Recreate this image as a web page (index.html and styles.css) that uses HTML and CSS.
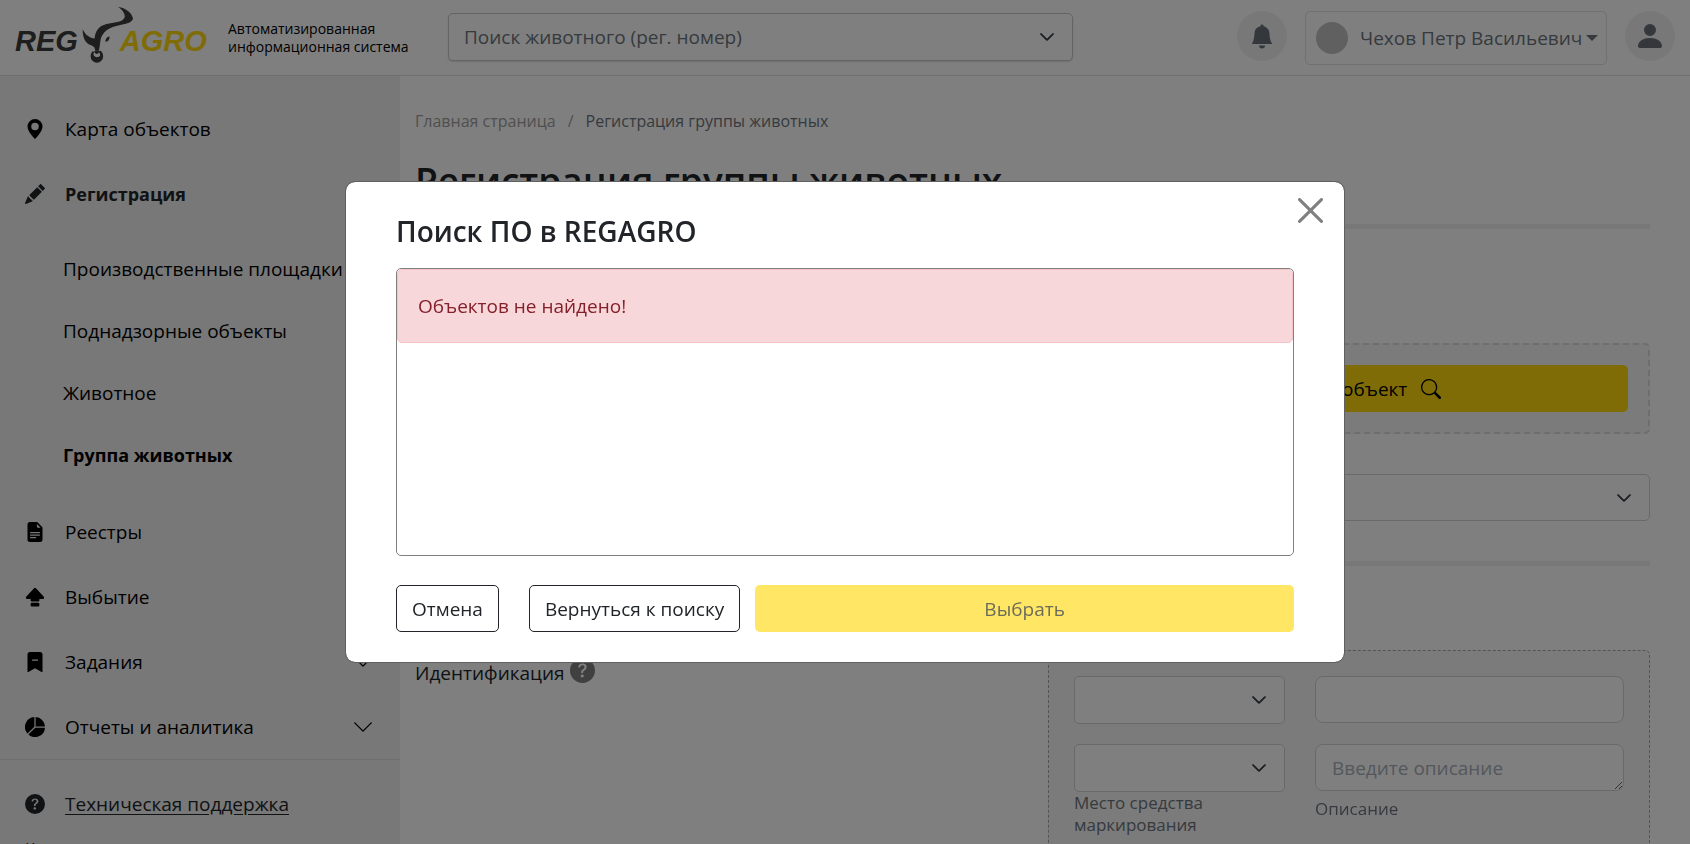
FILE: index.html
```html
<!DOCTYPE html>
<html lang="ru">
<head>
<meta charset="utf-8">
<title>Регистрация группы животных</title>
<link rel="stylesheet" href="styles.css">
</head>
<body>
<svg class="sprite" aria-hidden="true">
  <symbol id="i-pin" viewBox="0 0 16 16"><path fill-rule="evenodd" d="M8 16s6-5.686 6-10A6 6 0 0 0 2 6c0 4.314 6 10 6 10m0-7a3 3 0 1 1 0-6 3 3 0 0 1 0 6"/></symbol>
  <symbol id="i-pencil" viewBox="0 0 16 16"><path d="M12.854.146a.5.5 0 0 0-.707 0L10.500 1.793 14.207 5.500l1.647-1.646a.5.5 0 0 0 0-.708zM13.500 6.207 9.793 2.500 3.293 9H3.500a.5.5 0 0 1 .5.5v.5h.5a.5.5 0 0 1 .5.5v.5h.5a.5.5 0 0 1 .5.5v.5h.5a.5.5 0 0 1 .5.5v.207zM6.032 13.685A.5.5 0 0 1 6 13.500V13h-.5a.5.5 0 0 1-.5-.5V12h-.5a.5.5 0 0 1-.5-.5V11h-.5a.5.5 0 0 1-.5-.5V10h-.5a.5.5 0 0 1-.175-.032l-.179.178a.5.5 0 0 0-.11.168l-2 5a.5.5 0 0 0 .65.65l5-2a.5.5 0 0 0 .168-.11z"/></symbol>
  <symbol id="i-file" viewBox="0 0 16 16"><path d="M9.293 0H4a2 2 0 0 0-2 2v12a2 2 0 0 0 2 2h8a2 2 0 0 0 2-2V4.707A1 1 0 0 0 13.707 4L10 .293A1 1 0 0 0 9.293 0M9.500 3.500v-2l3 3h-2a1 1 0 0 1-1-1M4.500 9a.5.5 0 0 1 0-1h7a.5.5 0 0 1 0 1zM4 10.500a.5.5 0 0 1 .5-.5h7a.5.5 0 0 1 0 1h-7a.5.5 0 0 1-.5-.5m.5 2.500a.5.5 0 0 1 0-1h4a.5.5 0 0 1 0 1z"/></symbol>
  <symbol id="i-eject" viewBox="0 0 16 16"><path d="M7.270 1.047a1 1 0 0 1 1.460 0l6.345 6.770c.6.638.146 1.683-.73 1.683H11.500v1a1 1 0 0 1-1 1h-5a1 1 0 0 1-1-1v-1H1.654C.78 9.500.326 8.455.924 7.816zM4.500 13.500a1 1 0 0 1 1-1h5a1 1 0 0 1 1 1v1a1 1 0 0 1-1 1h-5a1 1 0 0 1-1-1z"/></symbol>
  <symbol id="i-bookmark" viewBox="0 0 16 16"><path fill-rule="evenodd" d="M2 15.500V2a2 2 0 0 1 2-2h8a2 2 0 0 1 2 2v13.500a.5.5 0 0 1-.74.439L8 13.069l-5.260 2.870A.5.5 0 0 1 2 15.500M6 6a.5.5 0 0 0 0 1h4a.5.5 0 0 0 0-1z"/></symbol>
  <symbol id="i-pie" viewBox="0 0 16 16"><path d="M15.985 8.500H8.207l-5.500 5.500a8 8 0 0 0 13.277-5.500zM2 13.292A8 8 0 0 1 7.500.015v7.778zM8.500.015V7.500h7.485A8 8 0 0 0 8.500.015"/></symbol>
  <symbol id="i-help" viewBox="0 0 16 16"><path d="M16 8A8 8 0 1 1 0 8a8 8 0 0 1 16 0M5.496 6.033h.825c.138 0 .248-.113.266-.25.09-.656.54-1.134 1.342-1.134.686 0 1.314.343 1.314 1.168 0 .635-.374.927-.965 1.371-.673.489-1.206 1.060-1.168 1.987l.003.217a.25.25 0 0 0 .25.246h.811a.25.25 0 0 0 .25-.25v-.105c0-.718.273-.927 1.010-1.486.609-.463 1.244-.977 1.244-2.056 0-1.511-1.276-2.241-2.673-2.241-1.267 0-2.655.590-2.750 2.286a.237.237 0 0 0 .241.247m2.325 6.443c.61 0 1.029-.394 1.029-.927 0-.552-.42-.94-1.029-.94-.584 0-1.009.388-1.009.94 0 .533.425.927 1.010.927z"/></symbol>
  <symbol id="i-down" viewBox="0 0 16 16"><path d="M1.646 4.646a.5.5 0 0 1 .708 0L8 10.293l5.646-5.647a.5.5 0 0 1 .708.708l-6 6a.5.5 0 0 1-.708 0l-6-6a.5.5 0 0 1 0-.708"/></symbol>
  <symbol id="i-bell" viewBox="0 0 16 16"><path d="M8 16a2 2 0 0 0 2-2H6a2 2 0 0 0 2 2m.995-14.901a1 1 0 1 0-1.990 0A5 5 0 0 0 3 6c0 1.098-.5 6-2 7h14c-1.500-1-2-5.902-2-7 0-2.420-1.720-4.440-4.005-4.901"/></symbol>
  <symbol id="i-person" viewBox="0 0 16 16"><path d="M3 14s-1 0-1-1 1-4 6-4 6 3 6 4-1 1-1 1zm5-6a3 3 0 1 0 0-6 3 3 0 0 0 0 6"/></symbol>
  <symbol id="i-search" viewBox="0 0 16 16"><path d="M11.742 10.344a6.500 6.500 0 1 0-1.397 1.398h-.001q.044.060.098.115l3.850 3.850a1 1 0 0 0 1.415-1.414l-3.850-3.850a1 1 0 0 0-.115-.1zM12 6.500a5.500 5.500 0 1 1-11 0 5.500 5.500 0 0 1 11 0"/></symbol>
  <symbol id="i-close" viewBox="0 0 16 16"><path d="M.293.293a1 1 0 0 1 1.414 0L8 6.586 14.293.293a1 1 0 1 1 1.414 1.414L9.414 8l6.293 6.293a1 1 0 0 1-1.414 1.414L8 9.414l-6.293 6.293a1 1 0 0 1-1.414-1.414L6.586 8 .293 1.707a1 1 0 0 1 0-1.414"/></symbol>
</svg>

<div class="page">
  <header class="topbar">
    <a class="brand" href="#">
      <span class="brand-reg">REG</span>
      <svg class="brand-bull" viewBox="22 17 154 170" aria-hidden="true">
        <path d="M130 18C158 22 174 40 176 54C174 68 150 71 126 76C100 82 84 96 79 114C76 126 76 140 73 150L62 150C60 140 58 138 48 134C32 128 24 112 24 86C34 106 46 112 60 114C62 92 72 76 96 70C118 65 142 66 150 52C155 42 144 26 130 18Z"/>
        <path d="M93 120C94 112 100 108 105 108C106 116 101 124 93 124Z"/>
        <path fill-rule="evenodd" d="M53 153C50 158 48 162 48 168A19 19 0 0 0 86 168C86 160 82 152 76 150L73 156C76 158 78 162 76 167C70 173 60 171 57 164C56 160 58 157 60 154Z"/>
        <path d="M59 152Q67 147 76 152Q72 162 66 161Q60 160 59 152Z"/>
      </svg>
      <span class="brand-agro">AGRO</span>
    </a>
    <p class="tagline">Автоматизированная<br>информационная система</p>
    <span class="select select-search"><select aria-label="Поиск животного"><option>Поиск животного (рег. номер)</option></select><svg class="chev"><use href="#i-down"/></svg></span>
    <div class="account">
      <button class="round" aria-label="Уведомления"><svg class="icon-lg"><use href="#i-bell"/></svg></button>
      <button class="user"><span class="avatar"></span>Чехов Петр Васильевич<span class="caret"></span></button>
      <button class="round" aria-label="Профиль"><svg class="icon-xl"><use href="#i-person"/></svg></button>
    </div>
  </header>

  <div class="body">
    <aside class="sidebar">
      <nav class="nav">
        <a class="nav-item" href="#"><svg class="icon"><use href="#i-pin"/></svg>Карта объектов</a>
        <a class="nav-item is-open" href="#"><svg class="icon"><use href="#i-pencil"/></svg>Регистрация</a>
        <div class="subnav">
          <a href="#">Производственные площадки</a>
          <a href="#">Поднадзорные объекты</a>
          <a href="#">Животное</a>
          <a class="is-active" href="#">Группа животных</a>
        </div>
        <a class="nav-item" href="#"><svg class="icon"><use href="#i-file"/></svg>Реестры</a>
        <a class="nav-item" href="#"><svg class="icon"><use href="#i-eject"/></svg>Выбытие</a>
        <a class="nav-item" href="#"><svg class="icon"><use href="#i-bookmark"/></svg>Задания<svg class="nav-chev"><use href="#i-down"/></svg></a>
        <a class="nav-item" href="#"><svg class="icon"><use href="#i-pie"/></svg>Отчеты и аналитика<svg class="nav-chev"><use href="#i-down"/></svg></a>
      </nav>
      <div class="support">
        <a class="nav-item is-link" href="#"><svg class="icon"><use href="#i-help"/></svg>Техническая поддержка</a>
        <p class="contacts">Контакты</p>
      </div>
    </aside>

    <main class="main">
      <nav class="crumbs"><a href="#">Главная страница</a><span class="slash">/</span><span>Регистрация группы животных</span></nav>
      <h1>Регистрация группы животных</h1>
      <hr>
      <section class="fields">
        <div class="pick"><button class="btn btn-pick">Выбрать объект<svg class="icon"><use href="#i-search"/></svg></button></div>
        <span class="select select-kind"><select aria-label="Вид"><option></option></select><svg class="chev"><use href="#i-down"/></svg></span>
      </section>
      <hr>
      <section class="ident">
        <h2>Идентификация <svg class="help"><use href="#i-help"/></svg></h2>
        <div class="marks">
          <span class="select"><select aria-label="Средство"><option></option></select><svg class="chev"><use href="#i-down"/></svg></span>
          <input class="text" type="text" aria-label="Номер">
          <div class="field"><span class="select"><select id="place"><option></option></select><svg class="chev"><use href="#i-down"/></svg></span><label for="place">Место средства маркирования</label></div>
          <div class="field field-note"><textarea class="text" id="note" rows="1" placeholder="Введите описание"></textarea><label for="note">Описание</label></div>
        </div>
      </section>
    </main>
  </div>
</div>

<div class="backdrop">
  <section class="modal" role="dialog" aria-modal="true" aria-labelledby="dlg-title">
    <button class="close" aria-label="Закрыть"><svg><use href="#i-close"/></svg></button>
    <h2 id="dlg-title">Поиск ПО в REGAGRO</h2>
    <div class="results"><p class="alert" role="alert">Объектов не найдено!</p></div>
    <div class="actions">
      <button class="btn btn-outline btn-cancel">Отмена</button>
      <button class="btn btn-outline">Вернуться к поиску</button>
      <button class="btn btn-main" disabled>Выбрать</button>
    </div>
  </section>
</div>
</body>
</html>
```
FILE: styles.css
```css
* { box-sizing: border-box; }
html, body { height: 100%; }
body {
  margin: 0;
  overflow: hidden;
  background: #fff;
  color: #212529;
  font-family: "Open Sans", "Noto Sans", sans-serif;
  font-size: 19px;
  line-height: 30px;
}
button, select, input, textarea { font: inherit; color: inherit; }
button { cursor: pointer; }
a { color: inherit; text-decoration: none; }
svg { fill: currentColor; flex: none; }
p, h1, h2 { margin: 0; }
.sprite { display: none; }
.page { display: flex; flex-direction: column; height: 100vh; overflow: hidden; }

/* header */
.topbar {
  display: flex;
  flex: none;
  align-items: center;
  height: 76px;
  padding: 0 15px;
  border-bottom: 1px solid #dcdcdc;
}
.brand {
  display: flex;
  align-items: center;
  width: 196px;
  height: 75px;
  font: italic bold 29px/32px "Liberation Sans", Arial, sans-serif;
}
.brand-reg { color: #3c3c3c; padding-top: 6px; }
.brand-agro { color: #ffd90f; padding-top: 6px; }
.brand-bull { width: 51px; height: 57px; margin: 0 -13px 6px 4px; color: #3c3c3c; }
.tagline { margin-left: 17px; color: #000; font-size: 14px; line-height: 18px; width: 220px; }
.select { display: flex; align-items: center; position: relative; width: 100%; height: 48px; }
.select select {
  appearance: none;
  width: 100%;
  height: 100%;
  padding: 0 48px 0 15px;
  border: 1px solid #ced4da;
  border-radius: 5px;
  background: #fff;
  cursor: pointer;
}
.chev { position: absolute; right: 18px; width: 16px; height: 16px; color: #343a40; stroke: #343a40; pointer-events: none; }
.select-search { flex: 0 1 625px; color: #6c757d; margin-bottom: 1px; }
.select-search select { border-color: #c8c8c8; box-shadow: 0 1px 2px #ddd; }
.account { display: flex; align-items: flex-start; gap: 18px; margin-left: auto; height: 53px; }
.round {
  display: grid;
  place-items: center;
  width: 50px;
  height: 50px;
  padding: 0;
  border: 0;
  border-radius: 50%;
  background: #f0f0f0;
  color: #68717a;
}
.icon-lg { width: 24px; height: 25px; }
.icon-xl { width: 32px; height: 32px; }
.user {
  display: flex;
  align-items: center;
  height: 54px;
  width: 302px;
  padding: 0 8px 0 10px;
  border: 1px solid #dee2e6;
  border-radius: 5px;
  background: #fff;
  color: #6c757d;
  white-space: nowrap;
}
.avatar { flex: none; width: 32px; height: 32px; margin-right: 12px; border-radius: 50%; background: #c0c0c0; }
.caret { margin-left: auto; border: 6px solid transparent; border-top-color: #6c757d; border-bottom: 0; }

/* sidebar */
.body { display: flex; flex: 1; min-height: 0; }
.sidebar { flex: none; width: 400px; padding-top: 20px; background: #f0f0f0; color: #000; overflow: hidden; }
.nav { border-bottom: 1px solid #dcdcdc; }
.nav-item { display: flex; align-items: center; gap: 20px; height: 65px; padding: 0 26px 0 25px; }
.icon { width: 20px; height: 20px; }
.is-open, .is-active { font-size: 18px; font-weight: 700; }
.is-open { color: #212529; }
.nav-chev { width: 22px; height: 22px; margin-left: auto; }
.subnav { padding: 12px 0 13px 63px; }
.subnav a { display: flex; align-items: center; height: 62px; white-space: nowrap; }
.support { padding-top: 11px; color: #212529; }
.is-link { text-decoration: underline; text-underline-offset: 3px; }
.contacts { padding-left: 25px; font-size: 16px; line-height: 26px; }

/* content */
.main { flex: 1; min-width: 0; padding: 30px 40px 0 15px; overflow: hidden; }
.crumbs { display: flex; gap: 12px; color: #6c757d; font-size: 16px; }
.crumbs a, .slash { color: #a0a0a0; }
h1 { margin-top: 21px; font-size: 37px; line-height: 48px; font-weight: 600; }
hr { height: 5px; margin: 19px 0 0; border: 0; background: #f0f0f0; }
.fields { display: flex; flex-direction: column; align-items: flex-end; gap: 40px; padding: 114px 0 21px; }
.pick { width: 602px; padding: 20px; border: 2px dashed #dcdcdc; border-radius: 5px; background: #f7f7f7; }
.btn { display: flex; align-items: center; justify-content: center; height: 47px; padding: 0 15px; border-radius: 5px; }
.btn-pick { gap: 14px; width: 100%; border: 0; background: #ffd90f; color: #000; }
.select-kind { width: 602px; height: 47px; }
.ident { display: flex; justify-content: space-between; padding-top: 84px; }
.ident h2 { display: flex; align-items: center; gap: 5px; height: 45px; font-size: 19px; font-weight: 400; }
.help { width: 25px; height: 25px; margin-bottom: 4px; color: #808080; }
.marks {
  display: grid;
  grid-template-columns: 211px 1fr;
  gap: 20px 30px;
  width: 602px;
  height: 300px;
  padding: 25px;
  align-content: start;
  border: 1px dashed #a8a8a8;
  border-radius: 5px;
  background: #f7f7f7;
}
.text { display: block; width: 100%; height: 47px; padding: 8px 16px; border: 1px solid #ced4da; border-radius: 8px; background: #fff; }
.text::placeholder { color: #a8b0b8; opacity: 1; }
.field label { display: block; color: #6c757d; font-size: 17px; line-height: 22px; }
.field-note label { padding-top: 7px; }

/* dialog */
.backdrop { position: fixed; inset: 0; display: grid; place-items: center; background: rgba(0, 0, 0, .5); }
.modal { position: relative; width: min(1000px, 100%); padding: 32px 50px 30px; border: 1px solid #606060; border-radius: 10px; background: #fff; background-clip: padding-box; }
.modal h2 { font-size: 28px; line-height: 34px; font-weight: 600; }
.close { position: absolute; top: 16px; right: 21px; width: 25px; height: 25px; padding: 0; border: 0; background: none; color: #808080; }
.close svg { display: block; width: 25px; height: 25px; }
.results { height: 288px; margin-top: 20px; border: 1px solid #808080; border-radius: 5px; }
.alert { padding: 21px 20px; border: 1px solid #f5c2c7; border-radius: 5px; background: #f8d7da; color: #842029; }
.actions { display: flex; gap: 15px; margin-top: 29px; }
.btn-outline { border: 1px solid #212529; background: #fff; color: #212529; white-space: nowrap; }
.btn-cancel { margin-right: 15px; }
.btn-main { flex: 1; border: 0; background: #ffe664; color: #6c6c5c; cursor: default; }
```
